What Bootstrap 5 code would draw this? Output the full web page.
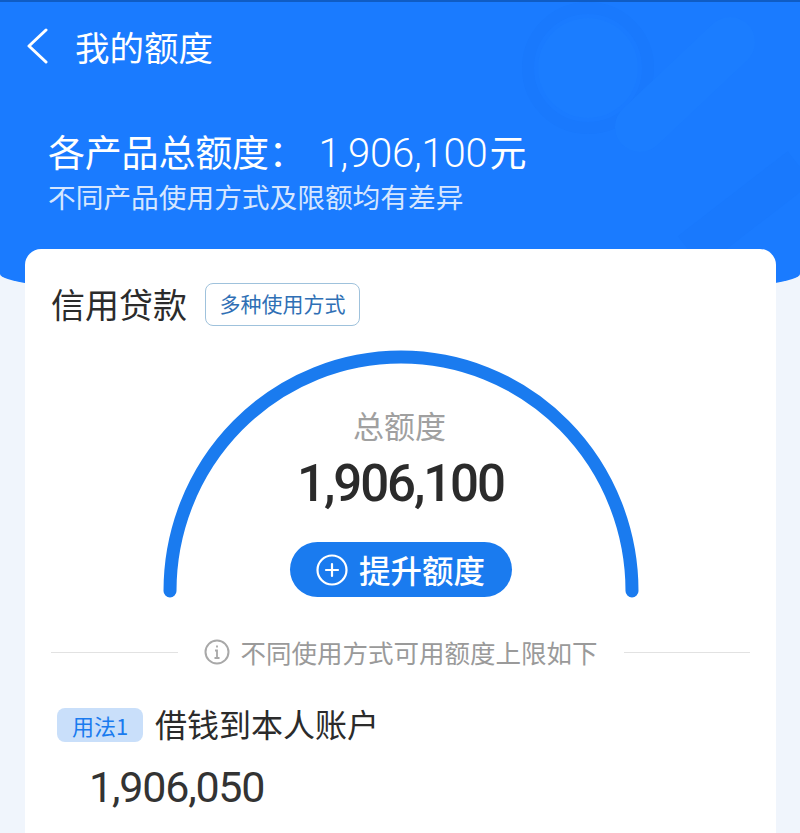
<!DOCTYPE html>
<html lang="zh-CN">
  <head>
    <meta charset="UTF-8" />
    <meta name="viewport" content="width=device-width, initial-scale=1.0" />
    <title>我的额度</title>
    <link href="https://cdn.jsdelivr.net/npm/bootstrap@5.3.0/dist/css/bootstrap.min.css" rel="stylesheet" />
    <style>
      body {
        background-color: #f0f5fc;
        font-family: "Noto Sans CJK SC", "Noto Sans", sans-serif;
        height: 833px;
        overflow: hidden;
      }
      .hero {
        position: relative;
        height: 300px;
        background-color: #1a7bff;
        border-top: 2px solid #0f5cc4;
        border-radius: 0 0 50% 50% / 0 0 26px 26px;
        color: #fff;
        overflow: hidden;
      }
      .hero-art {
        position: absolute;
        top: 0;
        right: 0;
      }
      .top-bar {
        position: relative;
        height: 88px;
        padding-left: 25px;
        gap: 26px;
      }
      .top-title {
        font-size: 34.5px;
        line-height: 1;
      }
      .hero-text {
        position: relative;
        padding: 38px 0 0 48px;
      }
      .hero-total {
        font-size: 37px;
        line-height: 46px;
        letter-spacing: -0.2px;
      }
      .hero-total span {
        font-family: "Roboto", sans-serif;
        font-weight: 300;
        font-size: 40px;
        margin-left: 13px;
        margin-right: 2px;
      }
      .hero-note {
        font-size: 27.7px;
        line-height: 36px;
        margin-top: 1px;
        color: #d5e6ff;
      }
      .sheet {
        position: relative;
        margin: -51px 24px 0 25px;
        height: 640px;
        padding: 27px 26px 0 26px;
        background-color: #fff;
        border-radius: 16px;
      }
      .sheet-title {
        font-size: 34px;
        line-height: 56px;
        color: #2b2b2b;
      }
      .mode-tag {
        margin-left: 18px;
        width: 155px;
        height: 43px;
        font-size: 21px;
        color: #2f6fb5;
        border: 1px solid #9fc2dc;
        border-radius: 8px;
      }
      .gauge {
        position: relative;
        width: 476px;
        height: 248px;
        margin: 18px auto 0;
      }
      .gauge-arc {
        position: absolute;
        top: 0;
        left: 0;
      }
      .gauge-body {
        position: relative;
        padding-top: 55px;
      }
      .gauge-label {
        font-size: 31px;
        line-height: 40px;
        margin-right: 2px;
        color: #a0a0a0;
      }
      .gauge-value {
        font-family: "Roboto", sans-serif;
        font-weight: 500;
        font-size: 51px;
        line-height: 60px;
        color: #2b2b2b;
        margin-top: 9px;
        letter-spacing: -2.1px;
      }
      .raise-btn {
        width: 222px;
        height: 55px;
        margin-top: 28px;
        padding: 0;
        gap: 11px;
        font-size: 31.5px;
        font-weight: 500;
        color: #fff;
        background-color: #1a7bef;
        border: 0;
        border-radius: 28px;
      }
      .limit-note {
        margin-top: 36px;
        height: 36px;
        gap: 26px;
        font-size: 25.5px;
        color: #9a9a9a;
      }
      .limit-rule {
        flex: 1;
        height: 1px;
        background-color: #e2e2e2;
      }
      .limit-text {
        gap: 11px;
      }
      .usage-row {
        margin: 37px 0 0 6px;
        gap: 12px;
        height: 36px;
      }
      .usage-tag {
        width: 86px;
        height: 34px;
        font-size: 22px;
        color: #1a7bef;
        background-color: #c9dffa;
        border-radius: 8px;
      }
      .usage-name {
        font-size: 32px;
        margin-bottom: 4px;
        color: #2b2b2b;
      }
      .usage-value {
        font-family: "Roboto", sans-serif;
        font-weight: 400;
        font-size: 43px;
        line-height: 48px;
        margin: 20px 0 0 38px;
        letter-spacing: -1.2px;
        color: #333;
      }
      .usage-sub {
        margin: 18px 0 0 39px;
        font-size: 25px;
        color: #999;
      }
    </style>
  </head>
  <body>
    <header class="hero">
      <svg class="hero-art" width="320" height="290" viewBox="0 0 320 290" fill="none">
        <circle cx="108" cy="66" r="50" fill="#1b7dff" />
        <circle cx="108" cy="66" r="60" stroke="#1979fd" stroke-width="12" />
        <path d="M250 40 L160 125" stroke="#1b7dff" stroke-width="50" stroke-linecap="round" />
        <path d="M320 165 L210 250" stroke="#1979fd" stroke-width="40" />
      </svg>
      <div class="top-bar d-flex align-items-center">
        <svg width="24" height="36" viewBox="0 0 24 36" fill="none">
          <path d="M21 2 L4 18 L21 34" stroke="#fff" stroke-width="3" stroke-linecap="round" stroke-linejoin="round" />
        </svg>
        <div class="top-title">我的额度</div>
      </div>
      <div class="hero-text">
        <div class="hero-total">各产品总额度：<span>1,906,100</span>元</div>
        <div class="hero-note">不同产品使用方式及限额均有差异</div>
      </div>
    </header>

    <main class="sheet">
      <div class="d-flex align-items-center">
        <div class="sheet-title">信用贷款</div>
        <div class="mode-tag d-flex align-items-center justify-content-center">多种使用方式</div>
      </div>

      <div class="gauge">
        <svg class="gauge-arc" width="476" height="248" viewBox="0 0 476 248" fill="none">
          <path d="M7 241 A231 234 0 0 1 469 241" stroke="#1a7bef" stroke-width="13" stroke-linecap="round" />
        </svg>
        <div class="gauge-body d-flex flex-column align-items-center">
          <div class="gauge-label">总额度</div>
          <div class="gauge-value">1,906,100</div>
          <button type="button" class="raise-btn btn d-flex align-items-center justify-content-center">
            <svg width="32" height="32" viewBox="0 0 32 32" fill="none" stroke="#fff" stroke-width="2.2">
              <circle cx="16" cy="16" r="14.5" />
              <path d="M16 10 V22 M10 16 H22" stroke-linecap="round" />
            </svg>
            提升额度
          </button>
        </div>
      </div>

      <div class="limit-note d-flex align-items-center">
        <div class="limit-rule"></div>
        <div class="limit-text d-flex align-items-center">
          <svg width="26" height="26" viewBox="0 0 26 26" fill="none" stroke="#a8a8a8" stroke-width="2">
            <circle cx="13" cy="13" r="11.5" />
            <path d="M11 11.5 H13 V19 M10.5 19 H15.5 M13 6.5 V8.4" stroke-width="1.8" />
          </svg>
          不同使用方式可用额度上限如下
        </div>
        <div class="limit-rule"></div>
      </div>

      <div class="usage-row d-flex align-items-center">
        <div class="usage-tag d-flex align-items-center justify-content-center">用法1</div>
        <div class="usage-name">借钱到本人账户</div>
      </div>
      <div class="usage-value">1,906,050</div>
      <div class="usage-sub">可借款</div>
    </main>

    <script src="https://cdn.jsdelivr.net/npm/bootstrap@5.3.0/dist/js/bootstrap.bundle.min.js"></script>
  </body>
</html>
